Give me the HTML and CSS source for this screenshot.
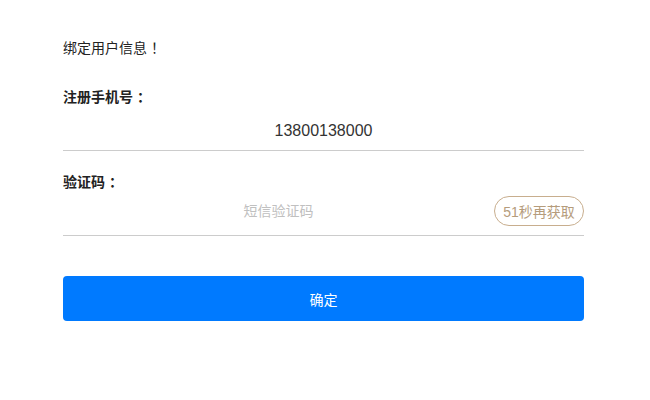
FILE: index.html
```html
<!DOCTYPE html>
<html lang="zh-CN">
<head>
<meta charset="utf-8">
<title>绑定用户信息</title>
<link rel="stylesheet" href="styles.css">
</head>
<body>
<div class="page">
  <p class="title">绑定用户信息<span class="punct">！</span></p>
  <div class="field">
    <div class="label">注册手机号<span class="punct">：</span></div>
    <div class="row phone-row">
      <input class="input" type="text" value="13800138000">
    </div>
  </div>
  <div class="field field-code">
    <div class="label">验证码<span class="punct">：</span></div>
    <div class="row code-row">
      <input class="input" type="text" placeholder="短信验证码">
      <button class="code-btn" type="button">51秒再获取</button>
    </div>
  </div>
  <button class="submit" type="button">确定</button>
</div>
</body>
</html>
```
FILE: styles.css
```css
html, body {
  margin: 0;
  padding: 0;
  background: #ffffff;
}
body {
  font-family: "Liberation Sans", "Noto Sans CJK SC", sans-serif;
  color: #333333;
  font-size: 14px;
}
.page {
  padding: 38px 66px 0 63px;
}
.title {
  margin: 0;
  line-height: 20px;
  font-size: 14px;
  color: #222222;
}
.punct {
  margin-left: 4px;
}
.field {
  margin-top: 29px;
}
.field-code {
  margin-top: 21px;
}
.label {
  font-weight: bold;
  line-height: 20px;
  font-size: 14px;
  color: #222222;
}
.row {
  display: flex;
  align-items: center;
  border-bottom: 1px solid #cccccc;
}
.phone-row {
  margin-top: 4px;
  height: 39px;
}
.code-row {
  padding: 4px 0 9px;
}
.input {
  flex: 1;
  min-width: 0;
  border: none;
  outline: none;
  background: transparent;
  text-align: center;
  font-family: "Liberation Sans", "Noto Sans CJK SC", sans-serif;
  padding: 0;
  margin: 0;
}
.phone-row .input {
  font-size: 16px;
  color: #333333;
  line-height: 39px;
  height: 39px;
}
.code-row .input {
  font-size: 14px;
  line-height: 30px;
  height: 30px;
  color: #333333;
}
.code-row .input::placeholder {
  color: #c0c0c0;
}
.code-btn {
  width: 90px;
  height: 30px;
  border: 1px solid #c8ae8e;
  border-radius: 15px;
  background: #ffffff;
  color: #b59c7c;
  font-size: 14px;
  font-family: "Liberation Sans", "Noto Sans CJK SC", sans-serif;
  padding: 0;
  margin: 0;
}
.submit {
  display: block;
  width: 100%;
  height: 45px;
  margin-top: 40px;
  border: none;
  border-radius: 4px;
  background: #007aff;
  color: #ffffff;
  font-size: 14px;
  font-family: "Liberation Sans", "Noto Sans CJK SC", sans-serif;
  padding: 0;
}
```
